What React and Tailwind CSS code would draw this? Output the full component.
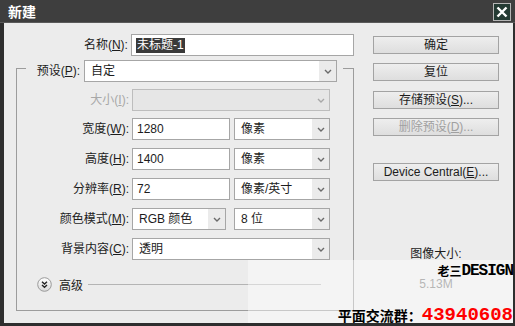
import React from "react"

function Arrow({ disabled }) {
  return (
    <svg width="8" height="5" viewBox="0 0 8 5">
      <polyline points="1,1 4,4 7,1" fill="none" stroke={disabled ? "#a8a8a8" : "#6a6a6a"} strokeWidth="1.4" />
    </svg>
  )
}

function Select({ value, width, disabled }) {
  return (
    <div className={`flex h-[22px] border ${disabled ? "border-[#bdbdbd] bg-[#e6e6e6]" : "border-[#a6a6a6] bg-white"} ${width}`}>
      <div className="flex-1 flex items-center pl-[6px] overflow-hidden whitespace-nowrap">{value}</div>
      <div className={`w-[17px] flex items-center justify-center ${disabled ? "bg-[#e6e6e6]" : "bg-[#ebebeb]"}`}>
        <Arrow disabled={disabled} />
      </div>
    </div>
  )
}

function Input({ value, width }) {
  return (
    <div className={`h-[22px] border border-[#a6a6a6] bg-white flex items-center pl-[4px] ${width}`}>{value}</div>
  )
}

function Row({ label, children, disabled, className = "" }) {
  return (
    <div className={`flex h-[22px] ${className}`}>
      <div className={`w-[115px] pr-[3px] flex items-center justify-end ${disabled ? "text-[#a8a8a8]" : ""}`}>{label}</div>
      {children}
    </div>
  )
}

function Button({ children, disabled, className = "" }) {
  return (
    <div className={`h-[18px] w-[126px] border border-[#a3a3a3] bg-gradient-to-b from-[#eeeeee] to-[#dedede] flex items-center justify-center ${disabled ? "text-[#a0a0a0]" : ""} ${className}`}>
      {children}
    </div>
  )
}

export default function App() {
  return (
    <div className="relative w-[515px] h-[326px] bg-[#2e2e2e] flex flex-col text-[12px] text-[#1c1c1c] font-['Liberation_Sans','Noto_Sans_CJK_SC',sans-serif] overflow-hidden">
      {/* title bar */}
      <div className="h-[23px] bg-[#3e3e3e] border-b border-[#5a5a5a] flex items-center justify-between pl-[8px] pr-[4px]">
        <span className="text-white font-bold text-[14px] font-['Noto_Sans_CJK_SC',sans-serif]">新建</span>
        <div className="w-[18px] h-[18px] mt-[2px] border border-[#b5b5b5] bg-[#243a33] flex items-center justify-center">
          <svg width="12" height="12" viewBox="0 0 12 12">
            <path d="M1.5 1.5 L10.5 10.5 M10.5 1.5 L1.5 10.5" stroke="white" strokeWidth="2.4" />
          </svg>
        </div>
      </div>

      {/* body */}
      <div className="ml-[4px] mr-[2px] h-[300px] bg-[#ececec] flex">
        {/* left column */}
        <div className="w-[350px] pt-[11px] flex flex-col">
          <div className="flex h-[22px]">
            <div className="w-[128px] pr-[3px] flex items-center justify-end">名称(<u>N</u>):</div>
            <div className="w-[225px] h-[22px] border border-[#a6a6a6] bg-white flex items-center pl-[4px]">
              <span className="bg-[#3a3a3a] text-white px-px leading-[15px]">未标题-1</span>
            </div>
          </div>

          {/* group box */}
          <div className="ml-[12px] mt-[4px] w-[338px] flex flex-col">
            <div className="flex h-[22px]">
              <div className="w-[10px] mt-[8px] border-t border-l border-[#9c9c9c]" />
              <div className="w-[58px] pr-[4px] flex items-center justify-end">预设(<u>P</u>):</div>
              <Select value="自定" width="w-[253px]" />
              <div className="flex-1 ml-[6px] mt-[8px] border-t border-r border-[#9c9c9c]" />
            </div>
            <div className="h-[229px] border-l border-r border-b border-[#9c9c9c] pt-[7px] flex flex-col">
              <Row label={<>大小(<u>I</u>):</>} disabled>
                <Select value="" width="w-[198px]" disabled />
              </Row>
              <Row label={<>宽度(<u>W</u>):</>} className="mt-[7px]">
                <Input value="1280" width="w-[98px]" />
                <div className="ml-[4px]"><Select value="像素" width="w-[96px]" /></div>
              </Row>
              <Row label={<>高度(<u>H</u>):</>} className="mt-[8px]">
                <Input value="1400" width="w-[98px]" />
                <div className="ml-[4px]"><Select value="像素" width="w-[96px]" /></div>
              </Row>
              <Row label={<>分辨率(<u>R</u>):</>} className="mt-[8px]">
                <Input value="72" width="w-[98px]" />
                <div className="ml-[4px]"><Select value="像素/英寸" width="w-[96px]" /></div>
              </Row>
              <Row label={<>颜色模式(<u>M</u>):</>} className="mt-[8px]">
                <Select value="RGB 颜色" width="w-[94px]" />
                <div className="ml-[8px]"><Select value="8 位" width="w-[96px]" /></div>
              </Row>
              <Row label={<>背景内容(<u>C</u>):</>} className="mt-[8px]">
                <Select value="透明" width="w-[198px]" />
              </Row>
              <div className="mt-[17px] h-[15px] flex items-center pl-[20px] pr-[32px]">
                <svg width="15" height="15" viewBox="0 0 15 15">
                  <defs>
                    <linearGradient id="adv" x1="0" y1="0" x2="0" y2="1">
                      <stop offset="0" stopColor="#ffffff" />
                      <stop offset="1" stopColor="#d8d8d8" />
                    </linearGradient>
                  </defs>
                  <circle cx="7.5" cy="7.5" r="6.8" fill="url(#adv)" stroke="#9a9a9a" />
                  <polyline points="5,4.8 7.5,7 10,4.8" fill="none" stroke="#222" strokeWidth="1.4" />
                  <polyline points="5,8 7.5,10.2 10,8" fill="none" stroke="#222" strokeWidth="1.4" />
                </svg>
                <span className="ml-[7px] font-['Noto_Sans_CJK_SC',sans-serif]">高级</span>
                <div className="flex-1 ml-[5px] h-px bg-[#b4b4b4]" />
              </div>
            </div>
          </div>
        </div>

        {/* right column */}
        <div className="ml-[19px] w-[126px] pt-[13px] flex flex-col items-center">
          <Button>确定</Button>
          <Button className="mt-[9px]">复位</Button>
          <Button className="mt-[10px]">存储预设(<u>S</u>)...</Button>
          <Button className="mt-[9px]" disabled>删除预设(<u>D</u>)...</Button>
          <Button className="mt-[27px]">Device Central(<u>E</u>)...</Button>
          <div className="mt-[66px] leading-[14px]">图像大小:</div>
          <div className="mt-[17px] leading-[12px] text-[#7a7a7a]">5.13M</div>
        </div>
      </div>

      {/* watermark overlay */}
      <div className="absolute left-[248px] top-[260px] right-[2px] bottom-[3px] bg-white/45 flex flex-col items-end justify-between pt-[5px]">
        <div className="font-bold text-black flex items-end leading-[12px]">
          <span className="text-[12px] font-['Noto_Sans_CJK_SC',sans-serif]">老三</span>
          <span className="text-[16px] font-['Liberation_Mono',monospace] tracking-[-1px]">DESIGN</span>
        </div>
        <div className="flex items-end leading-[18px] -mb-[1px]">
          <span className="text-[14px] font-bold text-black font-['Noto_Sans_CJK_SC',sans-serif]">平面交流群：</span>
          <span className="text-[19px] font-bold text-[#ff0000] font-['Liberation_Mono',monospace]">43940608</span>
        </div>
      </div>
    </div>
  )
}
